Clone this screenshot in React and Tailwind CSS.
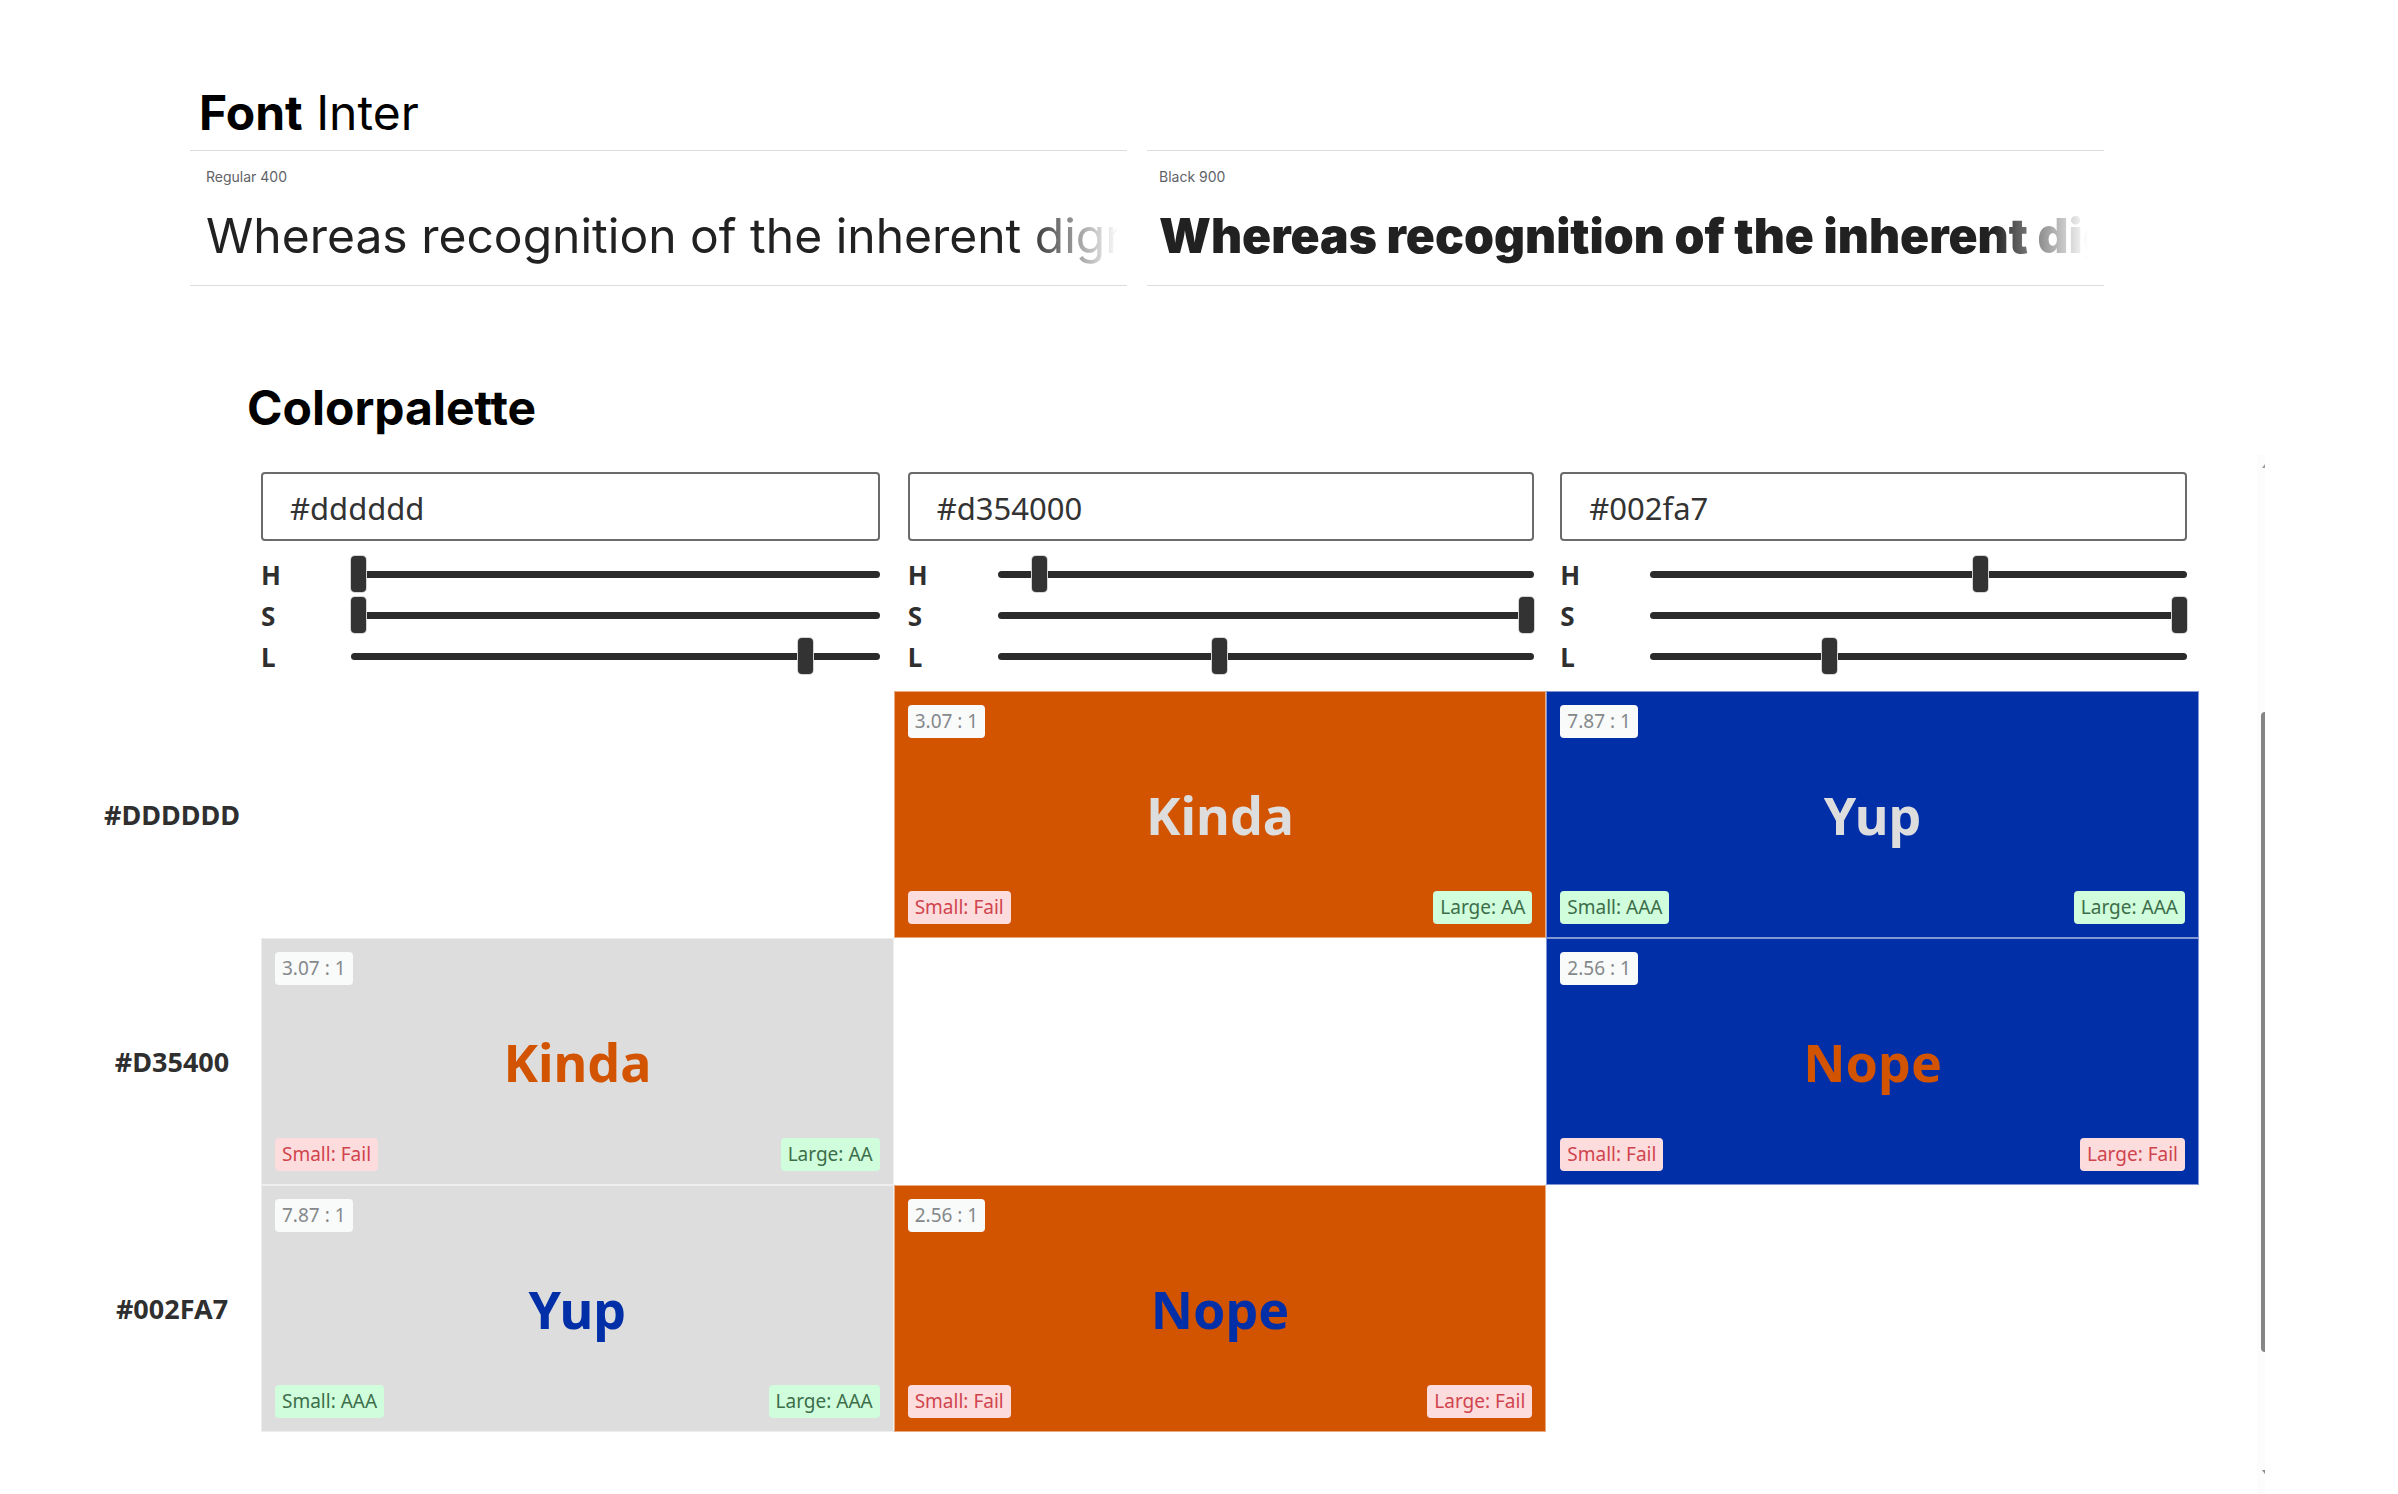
const colors = [
  {
    id: "grey",
    name: "#DDDDDD",
    input: "#dddddd",
    sliders: [
      { label: "H", max: 360, value: 0 },
      { label: "S", max: 100, value: 0 },
      { label: "L", max: 100, value: 87 },
    ],
  },
  {
    id: "orange",
    name: "#D35400",
    input: "#d354000",
    sliders: [
      { label: "H", max: 360, value: 24 },
      { label: "S", max: 100, value: 100 },
      { label: "L", max: 100, value: 41 },
    ],
  },
  {
    id: "blue",
    name: "#002FA7",
    input: "#002fa7",
    sliders: [
      { label: "H", max: 360, value: 223 },
      { label: "S", max: 100, value: 100 },
      { label: "L", max: 100, value: 33 },
    ],
  },
];

const textColor = {
  grey: "text-[#dddddd]",
  orange: "text-[#d35400]",
  blue: "text-[#002fa7]",
};

const fillColor = {
  grey: "bg-[#dddddd]",
  orange: "bg-[#d35400]",
  blue: "bg-[#002fa7]",
};

const results = {
  "grey-orange": { ratio: "3.07 : 1", verdict: "Kinda", small: "Fail", large: "AA" },
  "grey-blue": { ratio: "7.87 : 1", verdict: "Yup", small: "AAA", large: "AAA" },
  "orange-grey": { ratio: "3.07 : 1", verdict: "Kinda", small: "Fail", large: "AA" },
  "orange-blue": { ratio: "2.56 : 1", verdict: "Nope", small: "Fail", large: "Fail" },
  "blue-grey": { ratio: "7.87 : 1", verdict: "Yup", small: "AAA", large: "AAA" },
  "blue-orange": { ratio: "2.56 : 1", verdict: "Nope", small: "Fail", large: "Fail" },
};

function Specimen({ label, className, textClassName }) {
  return (
    <div className={"min-w-0 border-y border-[#dadce0] pt-4 pb-[19px] " + className}>
      <p className="text-[14px] leading-5 text-[#5f6368]">{label}</p>
      <p
        className={
          "mt-[19px] overflow-hidden text-[48px] leading-[60px] whitespace-nowrap text-[#212121] [mask-image:linear-gradient(to_right,black_calc(100%-96px),transparent)] " +
          textClassName
        }
      >
        Whereas recognition of the inherent dignity
      </p>
    </div>
  );
}

function Badge({ tone, children }) {
  const tones = {
    ratio: "bg-[#f9fafa] text-[#85898c]",
    pass: "bg-[#d0fddb] text-[#3c6e4a]",
    fail: "bg-[#fddcdd] text-[#d0444e]",
  };
  return (
    <span className={"rounded px-[7px] text-[19px] leading-[33px] " + tones[tone]}>{children}</span>
  );
}

function Slider({ id, label, max, value }) {
  return (
    <div className="grid h-[41px] grid-cols-[90px_1fr] items-center">
      <label htmlFor={id} className="text-left text-[26px] leading-8 font-bold">
        {label}
      </label>
      <input
        id={id}
        type="range"
        min="0"
        max={max}
        defaultValue={value}
        className="m-0 h-9 w-full appearance-none bg-transparent [&::-webkit-slider-runnable-track]:h-[7px] [&::-webkit-slider-runnable-track]:rounded-sm [&::-webkit-slider-runnable-track]:bg-[#2b2b2b] [&::-webkit-slider-thumb]:-mt-[15px] [&::-webkit-slider-thumb]:h-9 [&::-webkit-slider-thumb]:w-[15px] [&::-webkit-slider-thumb]:appearance-none [&::-webkit-slider-thumb]:rounded [&::-webkit-slider-thumb]:bg-[#333333] [&::-webkit-slider-thumb]:shadow-[0_0_0_1px_#d4d4d4]"
      />
    </div>
  );
}

function ColorControls({ color }) {
  return (
    <>
      <input
        type="text"
        aria-label={"Color " + color.name}
        defaultValue={color.input}
        className="block h-[69px] w-full rounded border-2 border-[#6b6b6b] bg-white px-[27px] pt-0.5 text-[31px] font-normal text-[#333333]"
      />
      <div className="mt-[13px]">
        {color.sliders.map((s) => (
          <Slider key={s.label} id={color.id + "-" + s.label} {...s} />
        ))}
      </div>
    </>
  );
}

function ResultCell({ text, fill }) {
  const result = results[text + "-" + fill];
  if (!result) return <td />;
  return (
    <td className={"border border-white/50 p-[13px] " + fillColor[fill]}>
      <div className="flex h-[219px] flex-col justify-between">
        <div className="flex">
          <Badge tone="ratio">{result.ratio}</Badge>
        </div>
        <p className={"text-center text-[52px] leading-[60px] font-bold " + textColor[text]}>
          {result.verdict}
        </p>
        <div className="flex justify-between">
          <Badge tone={result.small === "Fail" ? "fail" : "pass"}>Small: {result.small}</Badge>
          <Badge tone={result.large === "Fail" ? "fail" : "pass"}>Large: {result.large}</Badge>
        </div>
      </div>
    </td>
  );
}

function ScrollEdge() {
  return (
    <div aria-hidden="true" className="flex w-2 shrink-0 flex-col items-end bg-[#fcfcfc] pt-[9px] pb-5">
      <svg width="3" height="4" viewBox="0 0 3 4">
        <path d="M3 0 L0 4 H3 Z" fill="#9a9a9a" />
      </svg>
      <div className="mt-[244px] w-1 grow rounded-l bg-[#858585]" />
      <svg width="3" height="4" viewBox="0 0 3 4" className="mt-[118px]">
        <path d="M0 0 H3 V4 Z" fill="#8a8a8a" />
      </svg>
    </div>
  );
}

export default function App() {
  return (
    <main className="min-h-screen overflow-hidden bg-white font-['Inter',sans-serif] text-black">
      <section className="pt-[89px] pr-[294px] pl-[190px]">
        <h1 className="pl-[9px] text-[48px] leading-[48px] font-normal">
          <span className="font-bold">Font</span> Inter
        </h1>
        <div className="mt-[13px] grid grid-cols-[937fr_957fr] gap-5">
          <Specimen label="Regular 400" className="pr-2 pl-4" textClassName="font-normal" />
          <Specimen label="Black 900" className="pr-4 pl-3" textClassName="font-black" />
        </div>
      </section>

      <section className="mt-[98px]">
        <h2 className="pl-[247px] text-[48px] leading-[48px] font-bold">Colorpalette</h2>
        <div className="mt-[23px] flex gap-[58px] pr-[133px] pl-[83px] font-['Noto_Sans','Open_Sans',sans-serif] text-[#2f2f2f]">
          <div className="min-w-0 grow pt-[17px] pb-[62px]">
            <table className="w-full table-fixed border-separate border-spacing-0">
              <colgroup>
                <col className="w-[178px]" />
                <col className="w-[29.9%]" />
                <col />
                <col />
              </colgroup>
              <thead>
                <tr>
                  <td />
                  {colors.map((color) => (
                    <th
                      key={color.id}
                      scope="col"
                      className={"pb-[14px] " + (color.id === "grey" ? "pr-[14px] pl-0" : "pr-3 pl-[14px]")}
                    >
                      <ColorControls color={color} />
                    </th>
                  ))}
                </tr>
              </thead>
              <tbody>
                {colors.map((row) => (
                  <tr key={row.id} className="h-[247px]">
                    <th scope="row" className="text-center text-[27px] leading-8 font-bold">
                      {row.name}
                    </th>
                    {colors.map((col) => (
                      <ResultCell key={col.id} text={row.id} fill={col.id} />
                    ))}
                  </tr>
                ))}
              </tbody>
            </table>
          </div>
          <ScrollEdge />
        </div>
      </section>
    </main>
  );
}
